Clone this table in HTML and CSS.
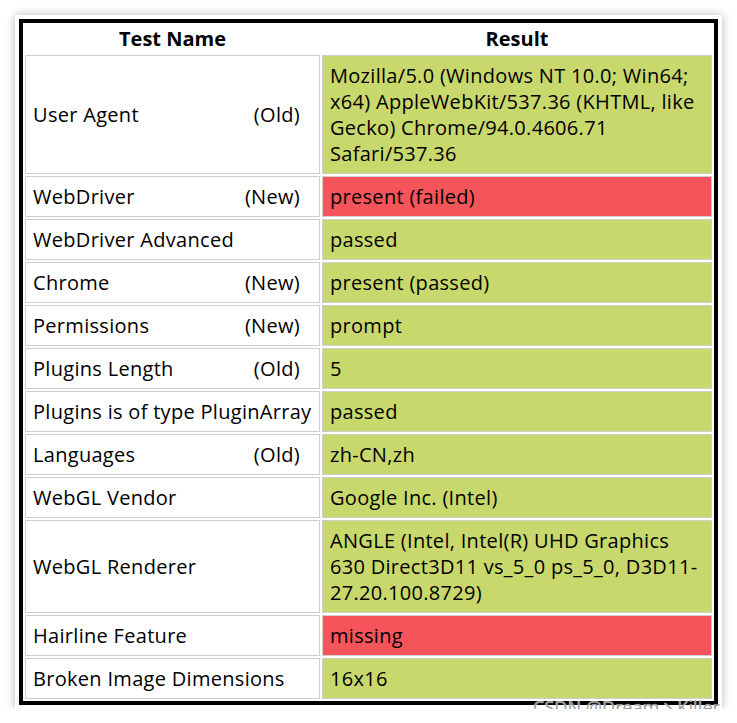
FILE: index.html
```html
<!DOCTYPE html>
<html>
<head>
<meta charset="utf-8">
<link rel="stylesheet" href="styles.css">
</head>
<body>
<div class="frame">
  <table class="results">
    <colgroup><col class="c1"><col class="c2"></colgroup>
    <thead>
      <tr><th>Test Name</th><th>Result</th></tr>
    </thead>
    <tbody>
      <tr><td><div class="name"><span>User Agent</span><span class="tag">(Old)</span></div></td><td class="passed">Mozilla/5.0 (Windows NT 10.0; Win64; x64) AppleWebKit/537.36 (KHTML, like Gecko) Chrome/94.0.4606.71 Safari/537.36</td></tr>
      <tr><td><div class="name"><span>WebDriver</span><span class="tag">(New)</span></div></td><td class="failed">present (failed)</td></tr>
      <tr><td><div class="name"><span>WebDriver Advanced</span></div></td><td class="passed">passed</td></tr>
      <tr><td><div class="name"><span>Chrome</span><span class="tag">(New)</span></div></td><td class="passed">present (passed)</td></tr>
      <tr><td><div class="name"><span>Permissions</span><span class="tag">(New)</span></div></td><td class="passed">prompt</td></tr>
      <tr><td><div class="name"><span>Plugins Length</span><span class="tag">(Old)</span></div></td><td class="passed">5</td></tr>
      <tr><td><div class="name"><span>Plugins is of type PluginArray</span></div></td><td class="passed">passed</td></tr>
      <tr><td><div class="name"><span>Languages</span><span class="tag">(Old)</span></div></td><td class="passed">zh-CN,zh</td></tr>
      <tr><td><div class="name"><span>WebGL Vendor</span></div></td><td class="passed">Google Inc. (Intel)</td></tr>
      <tr><td><div class="name"><span>WebGL Renderer</span></div></td><td class="passed">ANGLE (Intel, Intel(R) UHD Graphics 630 Direct3D11 vs_5_0 ps_5_0, D3D11-27.20.100.8729)</td></tr>
      <tr><td><div class="name"><span>Hairline Feature</span></div></td><td class="failed">missing</td></tr>
      <tr><td><div class="name"><span>Broken Image Dimensions</span></div></td><td class="passed">16x16</td></tr>
    </tbody>
  </table>
  <div class="watermark">CSDN @Dream丶Killer</div>
</div>
</body>
</html>
```
FILE: styles.css
```css
html, body {
  margin: 0;
  padding: 0;
  background: #ffffff;
}
body {
  font-family: "Open Sans", "Noto Sans", "Noto Sans CJK SC", sans-serif;
  color: #000;
}
.frame {
  position: relative;
  margin: 15px 0 0 15px;
  width: 699px;
  padding: 4px;
  background: #fff;
  box-shadow: 0 0 9px rgba(0, 0, 0, 0.28);
}
.results {
  width: 699px;
  border: 4px solid #000;
  border-spacing: 2px;
  table-layout: fixed;
  font-size: 20px;
  line-height: 26px;
  letter-spacing: 0.3px;
}
.c1 { width: 295px; }
.c2 { width: 390px; }
.results th {
  font-weight: bold;
  padding: 1px 7px;
  border: 0;
  text-align: center;
  letter-spacing: 0;
}
.results td {
  border: 1px solid #cfcfcf;
  padding: 7px 7px 6px 7px;
  vertical-align: middle;
}
.name {
  display: flex;
  justify-content: space-between;
}
.tag {
  margin-right: 12px;
}
.passed { background: #c8d86d; }
.failed { background: #f5545a; }
.watermark {
  position: absolute;
  right: 2px;
  bottom: -8px;
  font-family: "Noto Sans", "Noto Sans CJK SC", sans-serif;
  font-size: 18px;
  line-height: 20px;
  color: rgba(140, 140, 140, 0.85);
  text-shadow: 0 0 1px #fff;
  white-space: nowrap;
}
```
